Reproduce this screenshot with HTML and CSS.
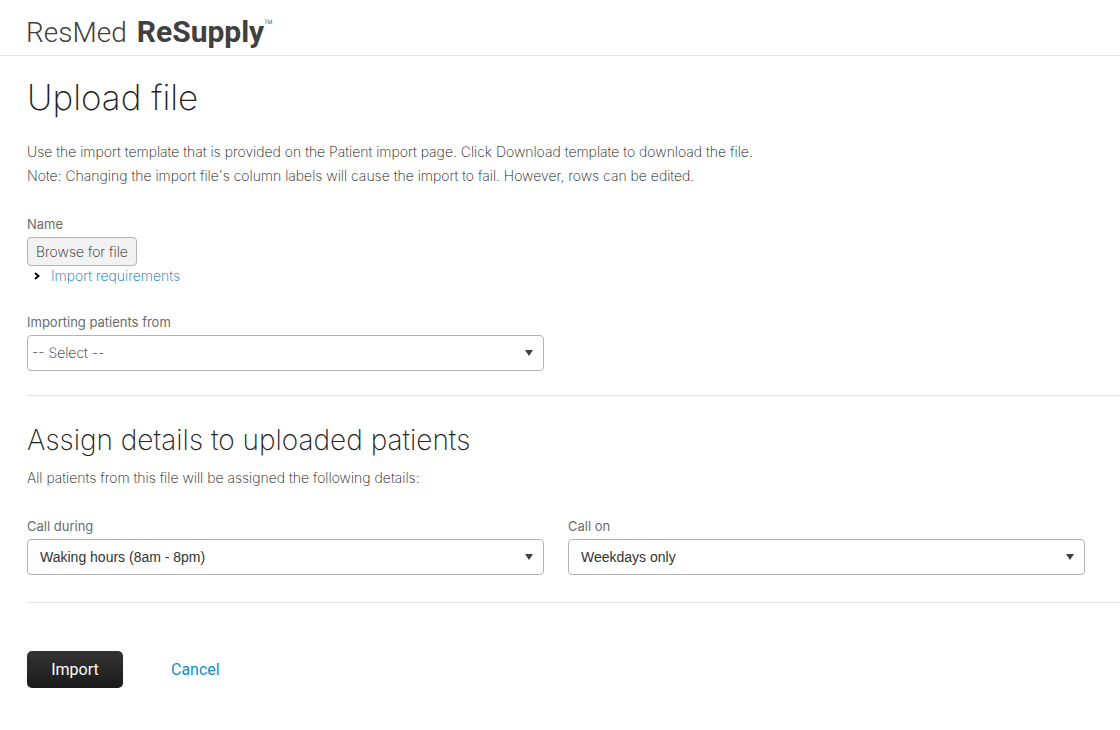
FILE: index.html
```html
<!DOCTYPE html>
<html lang="en">
<head>
    <meta charset="UTF-8">
    <meta name="viewport" content="width=device-width, initial-scale=1.0">
    <title>ResMed ReSupply - Upload file</title>
    <link rel="stylesheet" href="styles.css">
</head>
<body>
    <header class="site-header">
        <div class="logo">ResMed <strong>ReSupply</strong><span class="tm">™</span></div>
    </header>

    <main class="page">
        <h1>Upload file</h1>
        <p class="intro">
            Use the import template that is provided on the Patient import page. Click Download template to download the file.<br>
            Note: Changing the import file's column labels will cause the import to fail. However, rows can be edited.
        </p>

        <form>
            <section class="section">
                <div class="file-field">
                    <span class="label" id="fileLabel">Name</span>
                    <button type="button" class="browse" aria-describedby="fileLabel">Browse for file</button>
                    <div class="requirements">
                        <svg width="6" height="8" viewBox="0 0 6 8" aria-hidden="true"><path d="M1 1l3.5 3L1 7" fill="none" stroke="#000" stroke-width="1.8"/></svg>
                        <a href="#">Import requirements</a>
                    </div>
                </div>
                <div class="columns">
                    <div class="field">
                        <label for="source">Importing patients from</label>
                        <div class="select-box">
                            <select id="source" class="light">
                                <option>-- Select --</option>
                            </select>
                        </div>
                    </div>
                </div>
            </section>

            <section class="section details">
                <h2>Assign details to uploaded patients</h2>
                <p>All patients from this file will be assigned the following details:</p>
                <div class="columns">
                    <div class="field">
                        <label for="callDuring">Call during</label>
                        <div class="select-box">
                            <select id="callDuring">
                                <option>Waking hours (8am - 8pm)</option>
                            </select>
                        </div>
                    </div>
                    <div class="field">
                        <label for="callOn">Call on</label>
                        <div class="select-box">
                            <select id="callOn">
                                <option>Weekdays only</option>
                            </select>
                        </div>
                    </div>
                </div>
            </section>

            <div class="actions">
                <button type="submit" class="import">Import</button>
                <a href="#" class="cancel">Cancel</a>
            </div>
        </form>
    </main>
</body>
</html>
```

FILE: styles.css
```css
* {
    box-sizing: border-box;
}
body {
    margin: 0;
    background-color: #fff;
    color: #111;
    font-family: Inter, "Liberation Sans", sans-serif;
    font-size: 14px;
    font-weight: 200;
    line-height: 24px;
}
a {
    color: #006bb3;
    text-decoration: none;
}
a:hover {
    text-decoration: underline;
}
h1, h2, p {
    margin: 0;
    font-weight: 200;
}
.site-header {
    height: 56px;
    padding: 12px 26px 0;
    border-bottom: 1px solid #e5e5e5;
}
.logo {
    display: flex;
    align-items: baseline;
    gap: 10px;
    color: #404041;
    font-family: Roboto, "Liberation Sans", sans-serif;
    font-size: 28px;
    font-weight: 300;
    line-height: 40px;
}
.logo strong {
    font-size: 30px;
    font-weight: bold;
}
.logo .tm {
    align-self: flex-start;
    margin-left: -10px;
    font-family: "Open Sans", sans-serif;
    font-size: 12px;
    line-height: 24px;
}
.page {
    padding: 20px 0 40px 27px;
}
h1 {
    color: #222;
    font-size: 35px;
    line-height: 42px;
}
.intro {
    padding: 22px 27px 0 0;
}
.section {
    padding: 24px 0;
    border-bottom: 1px solid #e5e5e5;
}
.label,
label {
    display: block;
    padding-bottom: 1px;
    color: #6b6b6c;
    font-size: 13px;
    font-weight: 400;
}
.browse {
    display: block;
    height: 29px;
    padding: 0 8px;
    border: 1px solid #b3b3b3;
    border-radius: 4px;
    background-color: #f2f2f2;
    color: #111;
    font: inherit;
    line-height: 20px;
    cursor: pointer;
}
.requirements {
    display: flex;
    align-items: center;
    gap: 11px;
    padding: 0 7px 24px;
    line-height: 20px;
}
.columns {
    display: grid;
    grid-template-columns: 1fr 1fr;
    gap: 24px;
    padding-right: 35px;
}
.select-box {
    position: relative;
}
.select-box::after {
    content: "";
    position: absolute;
    top: 15px;
    right: 11px;
    border: 4px solid transparent;
    border-top: 6px solid #404041;
    border-bottom: 0;
    pointer-events: none;
}
select {
    display: block;
    width: 100%;
    height: 36px;
    padding: 0 28px 0 12px;
    appearance: none;
    border: 1px solid #b3b3b3;
    border-radius: 4px;
    background-color: #fff;
    color: #333;
    font-family: "Liberation Sans", Arial, sans-serif;
    font-size: 14px;
    cursor: pointer;
}
select.light {
    padding-left: 4px;
    color: #111;
    font: inherit;
}
.details {
    padding: 26px 0 27px;
}
h2 {
    padding-bottom: 8px;
    color: #222;
    font-size: 28px;
    line-height: 36px;
}
.details p {
    padding-bottom: 24px;
}
.actions {
    display: flex;
    align-items: center;
    gap: 48px;
    padding-top: 48px;
    font-family: Roboto, "Liberation Sans", sans-serif;
    font-size: 16px;
    font-weight: 400;
}
.import {
    width: 96px;
    height: 37px;
    border: 0;
    border-radius: 5px;
    background: linear-gradient(#333, #1a1a1a);
    color: #fff;
    font: inherit;
    cursor: pointer;
}
.cancel {
    color: #0f8fcb;
}
```
